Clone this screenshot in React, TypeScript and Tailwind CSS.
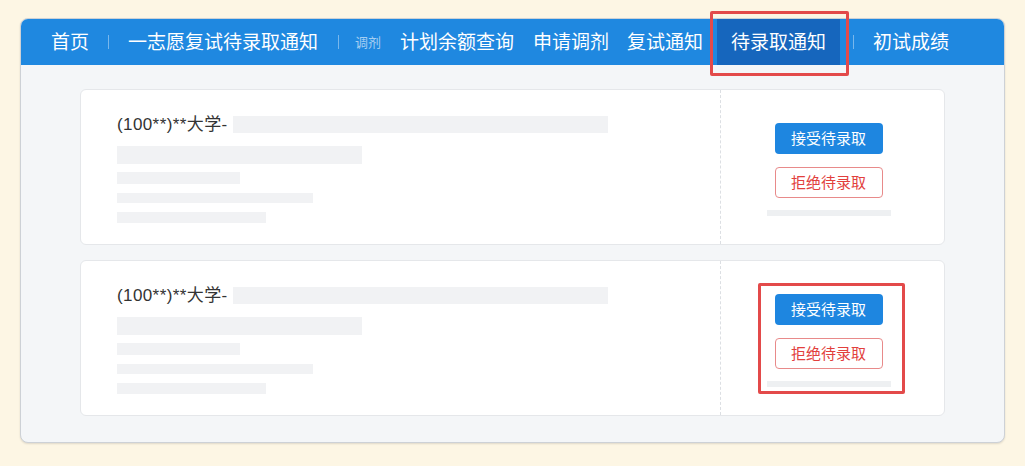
const navFont = { fontFamily: '"Liberation Sans", "Noto Sans CJK SC", sans-serif' };

function Sep({ className = "" }: { className?: string }) {
  return <span className={`inline-block w-px h-[14px] bg-white/40 ${className}`} />;
}

function NoticeCard({ highlight }: { highlight?: boolean }) {
  return (
    <div className="flex h-[156px] rounded-[6px] border border-[#e5e7ea] bg-white">
      <div className="flex-1 pl-[36px] pt-[26px]">
        <div className="flex items-center h-[17px]">
          <span className="text-[17px] leading-[17px] tracking-[0.4px] text-[#333]">(100**)**大学-</span>
          <span className="ml-[5px] h-[17px] w-[375px] bg-[#f1f2f4]" />
        </div>
        <div className="mt-[13px] h-[18px] w-[245px] bg-[#f1f2f4]" />
        <div className="mt-[8px] h-[12px] w-[123px] bg-[#f1f2f4]" />
        <div className="mt-[9px] h-[10px] w-[196px] bg-[#f1f2f4]" />
        <div className="mt-[9px] h-[11px] w-[149px] bg-[#f1f2f4]" />
      </div>
      <div className="w-[224px] border-l border-dashed border-[#dcdfe3] pr-[8px] pt-[33px] flex justify-center items-start">
        <div className="relative flex flex-col items-center">
          <button className="w-[108px] h-[31px] rounded-[4px] bg-[#1e86e0] text-white text-[15px] leading-none">
            接受待录取
          </button>
          <button className="mt-[13px] w-[108px] h-[31px] rounded-[4px] border border-[#e88a8a] bg-white text-[#e2403d] text-[15px] leading-none">
            拒绝待录取
          </button>
          <div className="mt-[12px] h-[6px] w-[124px] bg-[#eef0f2]" />
          {highlight && (
            <div className="absolute -left-[9px] -right-[14px] -top-[11px] -bottom-[7px] border-[3px] border-[#e34a4a] rounded-[2px]" />
          )}
        </div>
      </div>
    </div>
  );
}

export default function App() {
  return (
    <div className="min-h-[466px] w-full bg-[#fdf6e4] pt-[18px] px-[20px]" style={navFont}>
      <div className="rounded-[8px] border border-[#cdd1d6] bg-[#f4f6f8] shadow-[0_1px_2px_rgba(0,0,0,0.12)]">
        <div className="h-[46px] rounded-t-[7px] bg-[#1f88e0] flex items-center pl-[30px] text-white text-[19px] leading-none">
          <span>首页</span>
          <Sep className="ml-[19px]" />
          <span className="ml-[19px]">一志愿复试待录取通知</span>
          <Sep className="ml-[20px]" />
          <span className="ml-[16px] text-[13px] text-white/60">调剂</span>
          <span className="ml-[19px]">计划余额查询</span>
          <span className="ml-[19px]">申请调剂</span>
          <span className="ml-[18px]">复试通知</span>
          <span className="relative ml-[14px] h-full px-[14px] flex items-center bg-[#1666bd]">
            待录取通知
            <span className="absolute -left-[7px] -right-[9px] -top-[8px] -bottom-[11px] border-[3px] border-[#e34a4a] rounded-[2px]" />
          </span>
          <Sep className="ml-[13px]" />
          <span className="ml-[19px]">初试成绩</span>
        </div>
        <div className="px-[59px] pt-[24px] pb-[26px] flex flex-col gap-[15px]">
          <NoticeCard />
          <NoticeCard highlight />
        </div>
      </div>
    </div>
  );
}
